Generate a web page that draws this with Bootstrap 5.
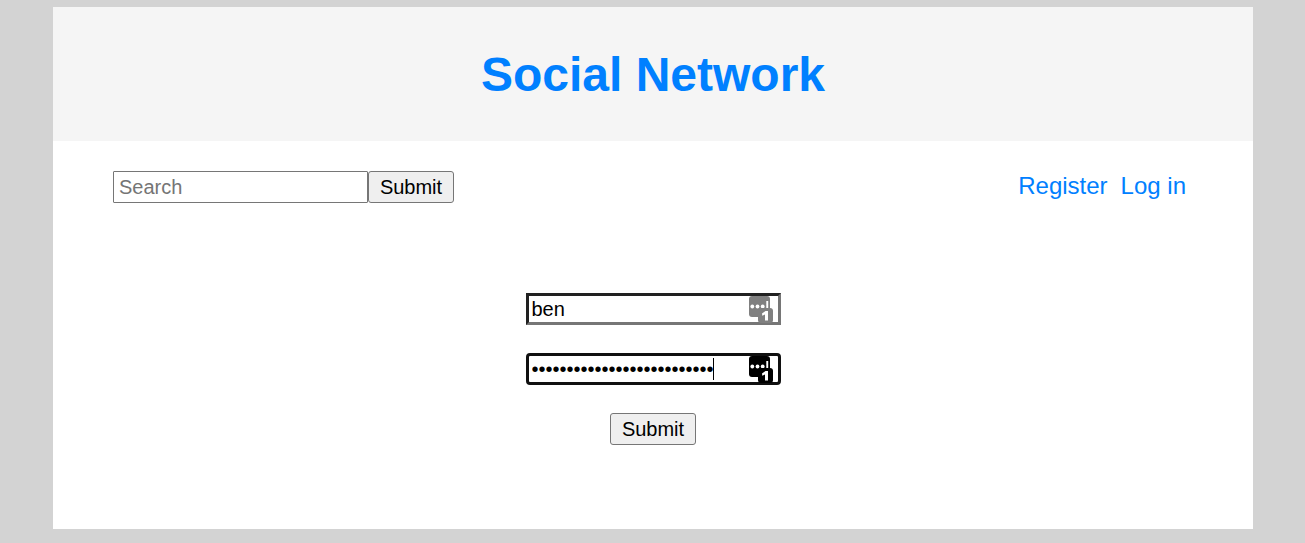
<!DOCTYPE html>
<html lang="en">
<head>
<meta charset="utf-8">
<meta name="viewport" content="width=device-width, initial-scale=1">
<title>Social Network</title>
<link href="https://cdn.jsdelivr.net/npm/bootstrap@5.3.0/dist/css/bootstrap.min.css" rel="stylesheet">
<style>
  body { background: #d3d3d3; font-family: "Liberation Sans", Arial, sans-serif; color: #000; padding: 7px 16px 14px 17px; }
  .page-sheet { max-width: 1200px; }
  .site-header { background: #f5f5f5; padding: 40px 16px 38px; }
  .site-header h1 { font-size: 48px; line-height: 56px; color: #0080ff; }
  .site-nav { padding: 30px 67px 0 60px; }
  .site-nav a { font-size: 24px; line-height: 30px; color: #0080ff; }
  .nav-links { gap: 13px; }
  .field { width: 255px; height: 32px; font-size: 20px; line-height: 26px; color: #000; background: #fff; padding: 0 3px; outline: 0; }
  .field-search { border: 1px solid #767676; padding: 0 5px; border-radius: 1px; }
  .field-search::placeholder { color: #757575; }
  .field-user { border: 3px solid; border-color: #212121 #767676 #767676 #212121; }
  .field-pass { border: 3px solid #101010; border-radius: 4px; caret-color: transparent; }
  .plain-btn { width: 86px; height: 32px; font-size: 20px; line-height: 28px; color: #000; background: #efefef; border: 1px solid #767676; border-radius: 3px; padding: 0; }
  .login-form { gap: 28px; padding: 90px 16px 84px; }
  .key-icon { right: 8px; top: 2px; }
  .caret { width: 1px; height: 22px; left: 187px; top: 5px; background: #000; }
</style>
</head>
<body>
<div class="page-sheet mx-auto bg-white">
  <header class="site-header text-center">
    <h1 class="fw-bold m-0">Social Network</h1>
  </header>
  <nav class="site-nav d-flex flex-wrap justify-content-between" aria-label="Main">
    <form class="d-flex">
      <input class="field field-search" type="text" placeholder="Search" aria-label="Search">
      <button class="plain-btn" type="submit">Submit</button>
    </form>
    <div class="nav-links d-flex">
      <a class="text-decoration-none" href="#register">Register</a>
      <a class="text-decoration-none" href="#login">Log in</a>
    </div>
  </nav>
  <main>
    <form class="login-form d-flex flex-column align-items-center">
      <div class="position-relative d-flex">
        <input class="field field-user rounded-0" type="text" value="ben" aria-label="Username">
        <svg class="key-icon position-absolute" width="25" height="28" viewBox="0 0 25 28" aria-hidden="true">
          <rect x="1" y="1" width="21" height="21" rx="3" fill="#808080"/>
          <g fill="#fff"><circle cx="4.3" cy="11.5" r="1.9"/><circle cx="9.5" cy="11.5" r="1.9"/><circle cx="14.7" cy="11.5" r="1.9"/><rect x="18.3" y="6" width="1.9" height="8"/></g>
          <rect x="10" y="13" width="15" height="15" rx="3" fill="#808080"/>
          <path d="M14 18.5L17.5 16H20V25.5H17V19.5L14.3 20.7Z" fill="#fff"/>
        </svg>
      </div>
      <div class="position-relative d-flex">
        <input class="field field-pass" type="password" value="abcdefghijklmnopqrstuvwxyz" aria-label="Password">
        <span class="caret position-absolute"></span>
        <svg class="key-icon position-absolute" width="25" height="28" viewBox="0 0 25 28" aria-hidden="true">
          <rect x="1" y="1" width="21" height="21" rx="3" fill="#000"/>
          <g fill="#fff"><circle cx="4.3" cy="11.5" r="1.9"/><circle cx="9.5" cy="11.5" r="1.9"/><circle cx="14.7" cy="11.5" r="1.9"/><rect x="18.3" y="6" width="1.9" height="8"/></g>
          <rect x="10" y="13" width="15" height="15" rx="3" fill="#000"/>
          <path d="M14 18.5L17.5 16H20V25.5H17V19.5L14.3 20.7Z" fill="#fff"/>
        </svg>
      </div>
      <button class="plain-btn" type="submit">Submit</button>
    </form>
  </main>
</div>
<script src="https://cdn.jsdelivr.net/npm/bootstrap@5.3.0/dist/js/bootstrap.bundle.min.js"></script>
</body>
</html>
